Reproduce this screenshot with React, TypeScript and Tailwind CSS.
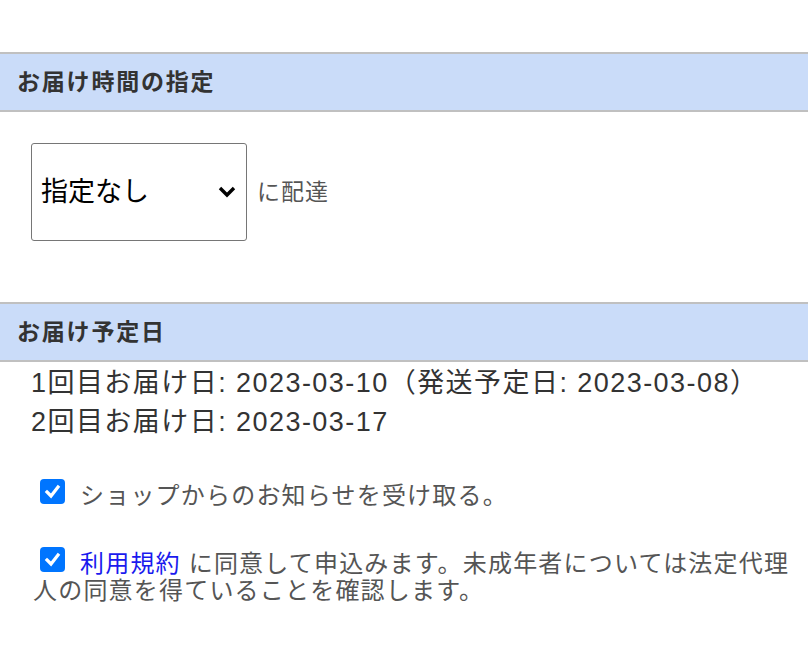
import React from 'react';

const font = { fontFamily: '"Liberation Sans", "Noto Sans CJK JP", sans-serif' };

function SectionHeader({ title }: { title: string }) {
  return (
    <div className="h-[60px] border-y-2 border-[#c0c0c0] bg-[#cadcf9] flex items-center px-[17px]">
      <h2 className="text-[23px] font-bold text-[#333333] tracking-[1.8px]">{title}</h2>
    </div>
  );
}

function Check() {
  return (
    <span className="inline-flex align-middle w-[25px] h-[25px] rounded-[4px] bg-[#0075ff] items-center justify-center ml-[7px] mr-[15px] -mt-[12px]">
      <svg width="17" height="17" viewBox="0 0 17 17">
        <polyline points="3,9 7,13 14,4" fill="none" stroke="white" strokeWidth="3.2" strokeLinecap="square" />
      </svg>
    </span>
  );
}

export default function App() {
  return (
    <div className="w-[808px] h-[671px] bg-white pt-[52px]" style={font}>
      <SectionHeader title="お届け時間の指定" />

      <div className="flex items-center pl-[31px] pt-[31px] pb-[61px]">
        <div className="w-[216px] h-[98px] border border-[#767676] rounded-[3px] flex items-center justify-between pl-[9px] pr-[10px]">
          <span className="text-[27px] text-black">指定なし</span>
          <svg width="18" height="12" viewBox="0 0 18 12">
            <polyline points="2,2 9,9 16,2" fill="none" stroke="black" strokeWidth="3.4" />
          </svg>
        </div>
        <span className="ml-[10px] text-[23px] tracking-[1px] text-[#555555]">に配達</span>
      </div>

      <SectionHeader title="お届け予定日" />

      <div className="pl-[31px] pt-[2px] text-[27px] leading-[39px] tracking-[1.45px] text-[#333333]">
        <p>1回目お届け日: 2023-03-10（発送予定日: 2023-03-08）</p>
        <p>2回目お届け日: 2023-03-17</p>
      </div>

      <div className="pl-[33px] pr-[8px] text-[24px] leading-[27px] tracking-[1.2px] text-[#555555]">
        <p className="mt-[40px]">
          <Check />ショップからのお知らせを受け取る。
        </p>
        <p className="mt-[41px]">
          <Check />
          <a className="text-[#1a1aee]">利用規約</a> に同意して申込みます。未成年者については法定代理人の同意を得ていることを確認します。
        </p>
      </div>
    </div>
  );
}
